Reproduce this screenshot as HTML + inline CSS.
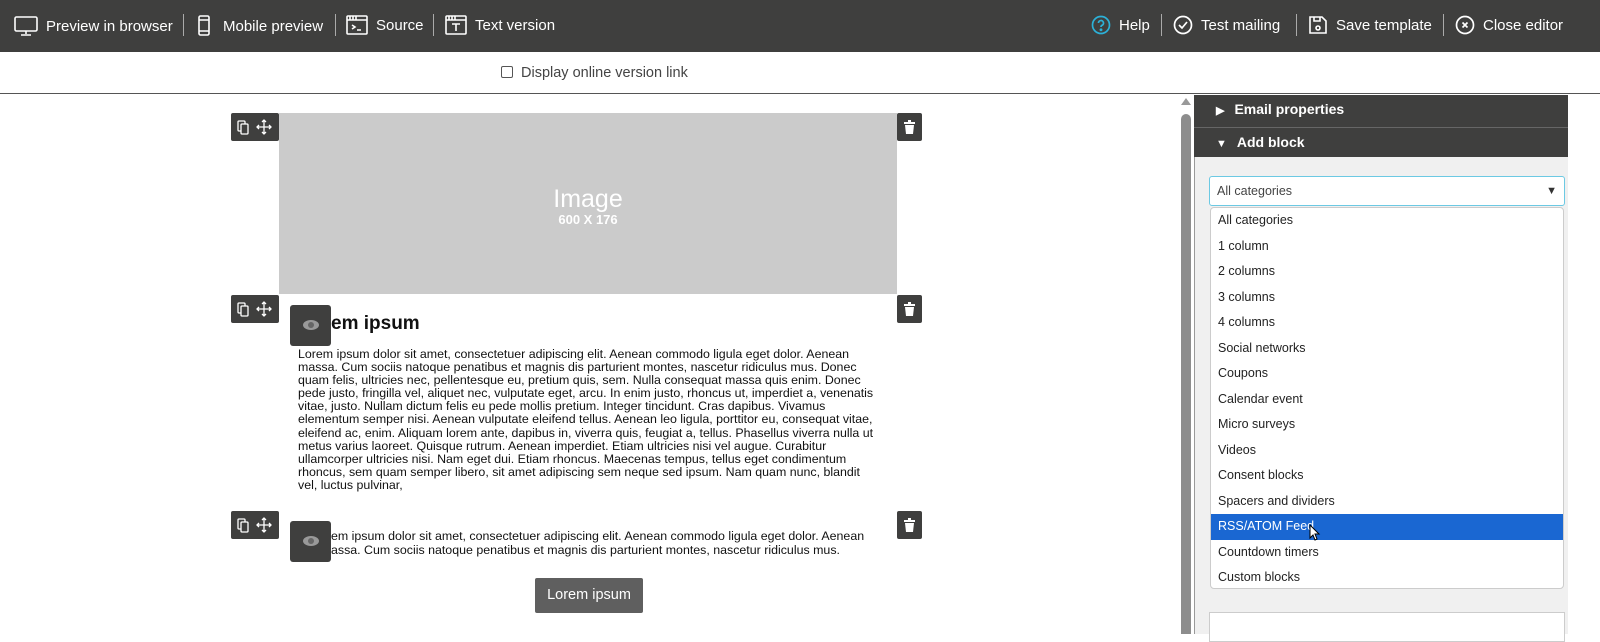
<!DOCTYPE html>
<html><head><style>
*{margin:0;padding:0;box-sizing:border-box}
body{width:1600px;height:634px;overflow:hidden;background:#fff;font-family:"Liberation Sans",sans-serif;position:relative}
.top{position:absolute;left:0;top:0;width:1600px;height:52px;background:#3f3f3e;color:#fff;font-size:15px}
.top .it{position:absolute;top:15px;display:flex;align-items:center;gap:8px;white-space:nowrap}
.sep{position:absolute;top:14px;width:1px;height:22px;background:#aaa}
.abs{position:absolute}
.tb{position:absolute;background:#3f3f3e;border-radius:2px}
p.t{position:absolute;left:298px;width:577px;font-size:12.4px;line-height:13.1px;color:#111}
.dd{position:absolute;left:1210px;top:207px;width:354px;height:382px;background:#fff;border:1px solid #ccc;border-radius:4px;font-size:12.5px;color:#222}
.dd div{height:25.5px;line-height:25.5px;padding-left:7px}
</style></head><body>
<div class="top">
 <div class="it" style="left:14px"><svg width="24" height="22" viewBox="0 0 24 22" fill="none" stroke="#fff" stroke-width="1.6"><rect x="1" y="2" width="22" height="14" rx="1.5"/><path d="M12 16v3M7 20h10"/></svg>Preview in browser</div>
 <div class="sep" style="left:183px"></div>
 <div class="it" style="left:197px"><svg width="14" height="22" viewBox="0 0 14 22" fill="none" stroke="#fff" stroke-width="1.6"><rect x="2" y="1" width="10" height="19" rx="1.5"/><path d="M2 5h10M2 16h10"/></svg><span style="margin-left:4px">Mobile preview</span></div>
 <div class="sep" style="left:335px"></div>
 <div class="it" style="left:346px"><svg width="22" height="20" viewBox="0 0 22 20" fill="none" stroke="#fff" stroke-width="1.6"><rect x="1" y="1" width="20" height="18" rx="1"/><path d="M1 5h20M4 1v4M7 1v4M10 1v4M6 10l3 2-3 2M11 15h4"/></svg>Source</div>
 <div class="sep" style="left:433px"></div>
 <div class="it" style="left:445px"><svg width="22" height="20" viewBox="0 0 22 20" fill="none" stroke="#fff" stroke-width="1.6"><rect x="1" y="1" width="20" height="18" rx="1"/><path d="M1 5h20M4 1v4M7 1v4M10 1v4M7 9h8M11 9v7"/></svg>Text version</div>
 <div class="it" style="left:1091px"><svg width="20" height="20" viewBox="0 0 20 20" fill="none" stroke="#2cb1d8" stroke-width="1.7"><circle cx="10" cy="10" r="8.5"/><path d="M7.5 8a2.5 2.5 0 1 1 3.5 2.3c-.8.4-1 .9-1 1.7"/><circle cx="10" cy="14.8" r=".6" fill="#2cb1d8"/></svg>Help</div>
 <div class="sep" style="left:1161px"></div>
 <div class="it" style="left:1173px"><svg width="20" height="20" viewBox="0 0 20 20" fill="none" stroke="#fff" stroke-width="1.7"><circle cx="10" cy="10" r="8.5"/><path d="M6 10l3 3 5-6"/></svg>Test mailing</div>
 <div class="sep" style="left:1296px"></div>
 <div class="it" style="left:1308px"><svg width="20" height="20" viewBox="0 0 20 20" fill="none" stroke="#fff" stroke-width="1.6"><path d="M2 2h12l4 4v12H2z"/><path d="M6 2v4h6V2"/><circle cx="10" cy="13" r="2"/></svg>Save template</div>
 <div class="sep" style="left:1443px"></div>
 <div class="it" style="left:1455px"><svg width="20" height="20" viewBox="0 0 20 20" fill="none" stroke="#fff" stroke-width="1.7"><circle cx="10" cy="10" r="8.5"/><path d="M7.5 7.5l5 5M12.5 7.5l-5 5"/></svg>Close editor</div>
</div>
<div class="abs" style="left:501px;top:66px;width:12px;height:12px;border:1px solid #555;border-radius:2px"></div>
<div class="abs" style="left:521px;top:65px;font-size:14.5px;color:#444">Display online version link</div>
<div class="abs" style="left:0;top:93px;width:1600px;height:1px;background:#555"></div>

<div class="abs" style="left:279px;top:113px;width:618px;height:181px;background:#cbcbcb;color:#fff;text-align:center">
 <div style="font-size:25px;margin-top:72px;line-height:28px">Image</div>
 <div style="font-size:13px;font-weight:bold;line-height:14px">600 X 176</div>
</div>
<div class="tb" style="left:231px;top:113px;width:48px;height:28px"></div>
<div class="tb" style="left:897px;top:113px;width:25px;height:28px"></div>
<div class="tb" style="left:231px;top:295px;width:48px;height:28px"></div>
<div class="tb" style="left:897px;top:295px;width:25px;height:28px"></div>
<div class="tb" style="left:231px;top:511px;width:48px;height:28px"></div>
<div class="tb" style="left:897px;top:511px;width:25px;height:28px"></div>
<svg class="abs" style="left:0;top:0" width="1000" height="634" fill="none" stroke="#fff" stroke-width="1.3">
 <g id="cp"><rect x="238" y="121" width="7" height="10" rx="1"/><rect x="241" y="124" width="7" height="10" rx="1" fill="#3f3f3e"/><path d="M264 120v14M257 127h14M262 122l2-2 2 2M262 132l2 2 2-2M259 125l-2 2 2 2M269 125l2 2-2 2"/></g>
 <use href="#cp" y="182"/><use href="#cp" y="398"/>
 <g id="tr" fill="#fff" stroke="none"><rect x="904" y="122" width="11" height="2"/><rect x="908" y="120" width="3" height="2"/><path d="M905 125h9l-1 9h-7z"/></g>
 <use href="#tr" y="182"/><use href="#tr" y="398"/>
</svg>
<div class="tb" style="left:290px;top:305px;width:41px;height:41px;border-radius:3px"></div>
<div class="tb" style="left:290px;top:521px;width:41px;height:41px;border-radius:3px"></div>
<svg class="abs" style="left:0;top:0" width="400" height="600"><g id="ey"><ellipse cx="311" cy="325" rx="8" ry="5" fill="#999"/><circle cx="311" cy="325" r="3" fill="#666"/></g><use href="#ey" y="216"/></svg>
<div class="abs" style="left:331px;top:313px;font-size:19px;font-weight:bold;color:#111">em ipsum</div>
<p class="t" style="top:348px">Lorem ipsum dolor sit amet, consectetuer adipiscing elit. Aenean commodo ligula eget dolor. Aenean massa. Cum sociis natoque penatibus et magnis dis parturient montes, nascetur ridiculus mus. Donec quam felis, ultricies nec, pellentesque eu, pretium quis, sem. Nulla consequat massa quis enim. Donec pede justo, fringilla vel, aliquet nec, vulputate eget, arcu. In enim justo, rhoncus ut, imperdiet a, venenatis vitae, justo. Nullam dictum felis eu pede mollis pretium. Integer tincidunt. Cras dapibus. Vivamus elementum semper nisi. Aenean vulputate eleifend tellus. Aenean leo ligula, porttitor eu, consequat vitae, eleifend ac, enim. Aliquam lorem ante, dapibus in, viverra quis, feugiat a, tellus. Phasellus viverra nulla ut metus varius laoreet. Quisque rutrum. Aenean imperdiet. Etiam ultricies nisi vel augue. Curabitur ullamcorper ultricies nisi. Nam eget dui. Etiam rhoncus. Maecenas tempus, tellus eget condimentum rhoncus, sem quam semper libero, sit amet adipiscing sem neque sed ipsum. Nam quam nunc, blandit<br>vel, luctus pulvinar,</p>
<p class="t" style="top:530px;left:331px;width:560px">em ipsum dolor sit amet, consectetuer adipiscing elit. Aenean commodo ligula eget dolor. Aenean</p>
<p class="t" style="top:544px;left:331px;width:560px">assa. Cum sociis natoque penatibus et magnis dis parturient montes, nascetur ridiculus mus.</p>
<div class="abs" style="left:535px;top:578px;width:108px;height:35px;background:#5f5f5f;border-radius:2px;color:#fff;font-size:14.5px;text-align:center;line-height:35px">Lorem ipsum</div>

<div class="abs" style="left:1181px;top:114px;width:10px;height:520px;background:#8d8d8d;border-radius:5px 5px 0 0"></div>
<div class="abs" style="left:1181px;top:98px;width:0;height:0;border-left:5px solid transparent;border-right:5px solid transparent;border-bottom:7px solid #999"></div>
<div class="abs" style="left:1194px;top:95px;width:374px;height:539px;background:#f0f0f0;border-left:1px solid #999"></div>
<div class="abs" style="left:1194px;top:95px;width:374px;height:32px;background:#3f3f3e;color:#fff;font-weight:bold;font-size:14px;line-height:28px;padding-left:22px"><span style="font-size:11px;margin-right:10px">&#9654;</span>Email properties</div>
<div class="abs" style="left:1194px;top:127px;width:374px;height:30px;background:#3f3f3e;border-top:1px solid #666;color:#fff;font-weight:bold;font-size:14px;line-height:28px;padding-left:22px"><span style="font-size:11px;margin-right:10px">&#9660;</span>Add block</div>
<div class="abs" style="left:1209px;top:176px;width:356px;height:30px;background:#fff;border:1px solid #6cc9e3;border-radius:3px;font-size:12.5px;color:#444;line-height:28px;padding-left:7px">All categories<span style="position:absolute;right:7px;font-size:11px;color:#333">&#9660;</span></div>
<div class="dd">
<div>All categories</div><div>1 column</div><div>2 columns</div><div>3 columns</div><div>4 columns</div><div>Social networks</div><div>Coupons</div><div>Calendar event</div><div>Micro surveys</div><div>Videos</div><div>Consent blocks</div><div>Spacers and dividers</div><div style="background:#1a67d2;color:#fff">RSS/ATOM Feed</div><div>Countdown timers</div><div>Custom blocks</div>
</div>
<svg class="abs" style="left:1309px;top:524px" width="12" height="18"><path d="M1 1v13l3-3 2 5 2-1-2-5h4z" fill="#fff" stroke="#000"/></svg>
<div class="abs" style="left:1209px;top:612px;width:356px;height:30px;background:#fff;border:1px solid #ccc"></div>
</body></html>
